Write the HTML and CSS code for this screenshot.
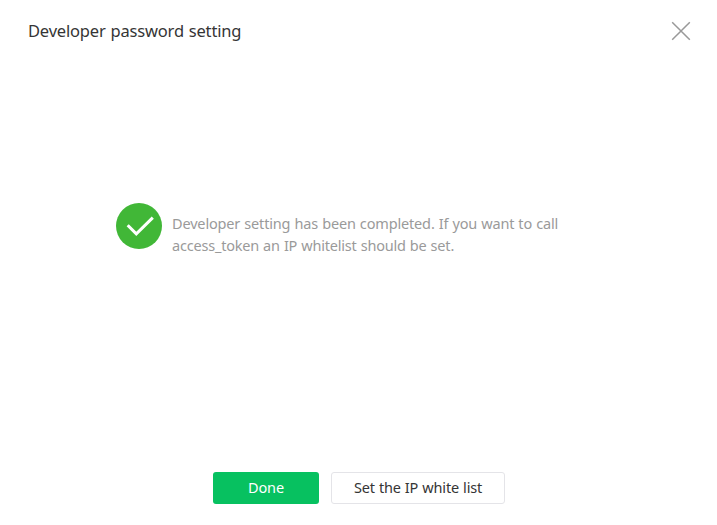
FILE: index.html
```html
<!DOCTYPE html>
<html lang="en">
<head>
<meta charset="utf-8">
<title>Developer password setting</title>
<link rel="stylesheet" href="styles.css">
</head>
<body>
<div class="dialog">
  <header class="header">
    <h1 class="title">Developer password setting</h1>
    <button class="close" aria-label="Close"><svg width="20" height="20" viewBox="0 0 20 20"><path d="M1.2 1.2l17.6 17.6M18.8 1.2L1.2 18.8"/></svg></button>
  </header>
  <main class="body">
    <svg class="check" width="46" height="46" viewBox="0 0 46 46"><circle cx="23" cy="23" r="23"/><path d="M11.7 22.2l8.6 8.7L36.8 14.6"/></svg>
    <p class="message"><span class="lead">Developer setting has been completed. If you want to call</span><br><span class="detail">access_token an IP whitelist should be set.</span></p>
  </main>
  <footer class="footer">
    <button class="btn primary">Done</button>
    <button class="btn secondary">Set the IP white list</button>
  </footer>
</div>
</body>
</html>
```
FILE: styles.css
```css
* { box-sizing: border-box; }
body { margin: 0; background: #fff; font-family: "Noto Sans", "Open Sans", sans-serif; }
button { font-family: inherit; cursor: pointer; margin: 0; }
.dialog { width: 717px; height: 525px; display: flex; flex-direction: column; }
.header { height: 62px; flex: none; display: flex; align-items: center; justify-content: space-between; padding: 0 26px 0 28px; }
.title { margin: 0; font-size: 16.5px; line-height: 22px; letter-spacing: -0.18px; word-spacing: 0.8px; font-weight: 400; color: #353535; white-space: nowrap; }
.close { border: 0; padding: 0; background: none; width: 20px; height: 20px; }
.close svg { display: block; fill: none; stroke: #999; stroke-width: 1.5; }
.body { flex: 1; display: flex; align-items: flex-start; padding: 141px 0 0 116px; }
.check { flex: none; margin-right: 10px; }
.check circle { fill: #41b737; }
.check path { fill: none; stroke: #fff; stroke-width: 3; }
.message { margin: 9px 0 0; font-size: 14.5px; line-height: 22px; color: #9a9a9a; white-space: nowrap; }
.lead { letter-spacing: -0.16px; word-spacing: 0.5px; }
.detail { letter-spacing: -0.2px; word-spacing: 0.5px; }
.footer { height: 53px; flex: none; display: flex; justify-content: center; gap: 12px; padding-left: 1px; }
.btn { height: 32px; border-radius: 3px; font-size: 14.5px; letter-spacing: -0.17px; word-spacing: 0.5px; padding: 0 0 2px; white-space: nowrap; }
.primary { width: 106px; border: 0; background: #07c160; color: #fff; }
.secondary { width: 174px; border: 1px solid #e4e4e8; background: #fff; color: #353535; }
```
